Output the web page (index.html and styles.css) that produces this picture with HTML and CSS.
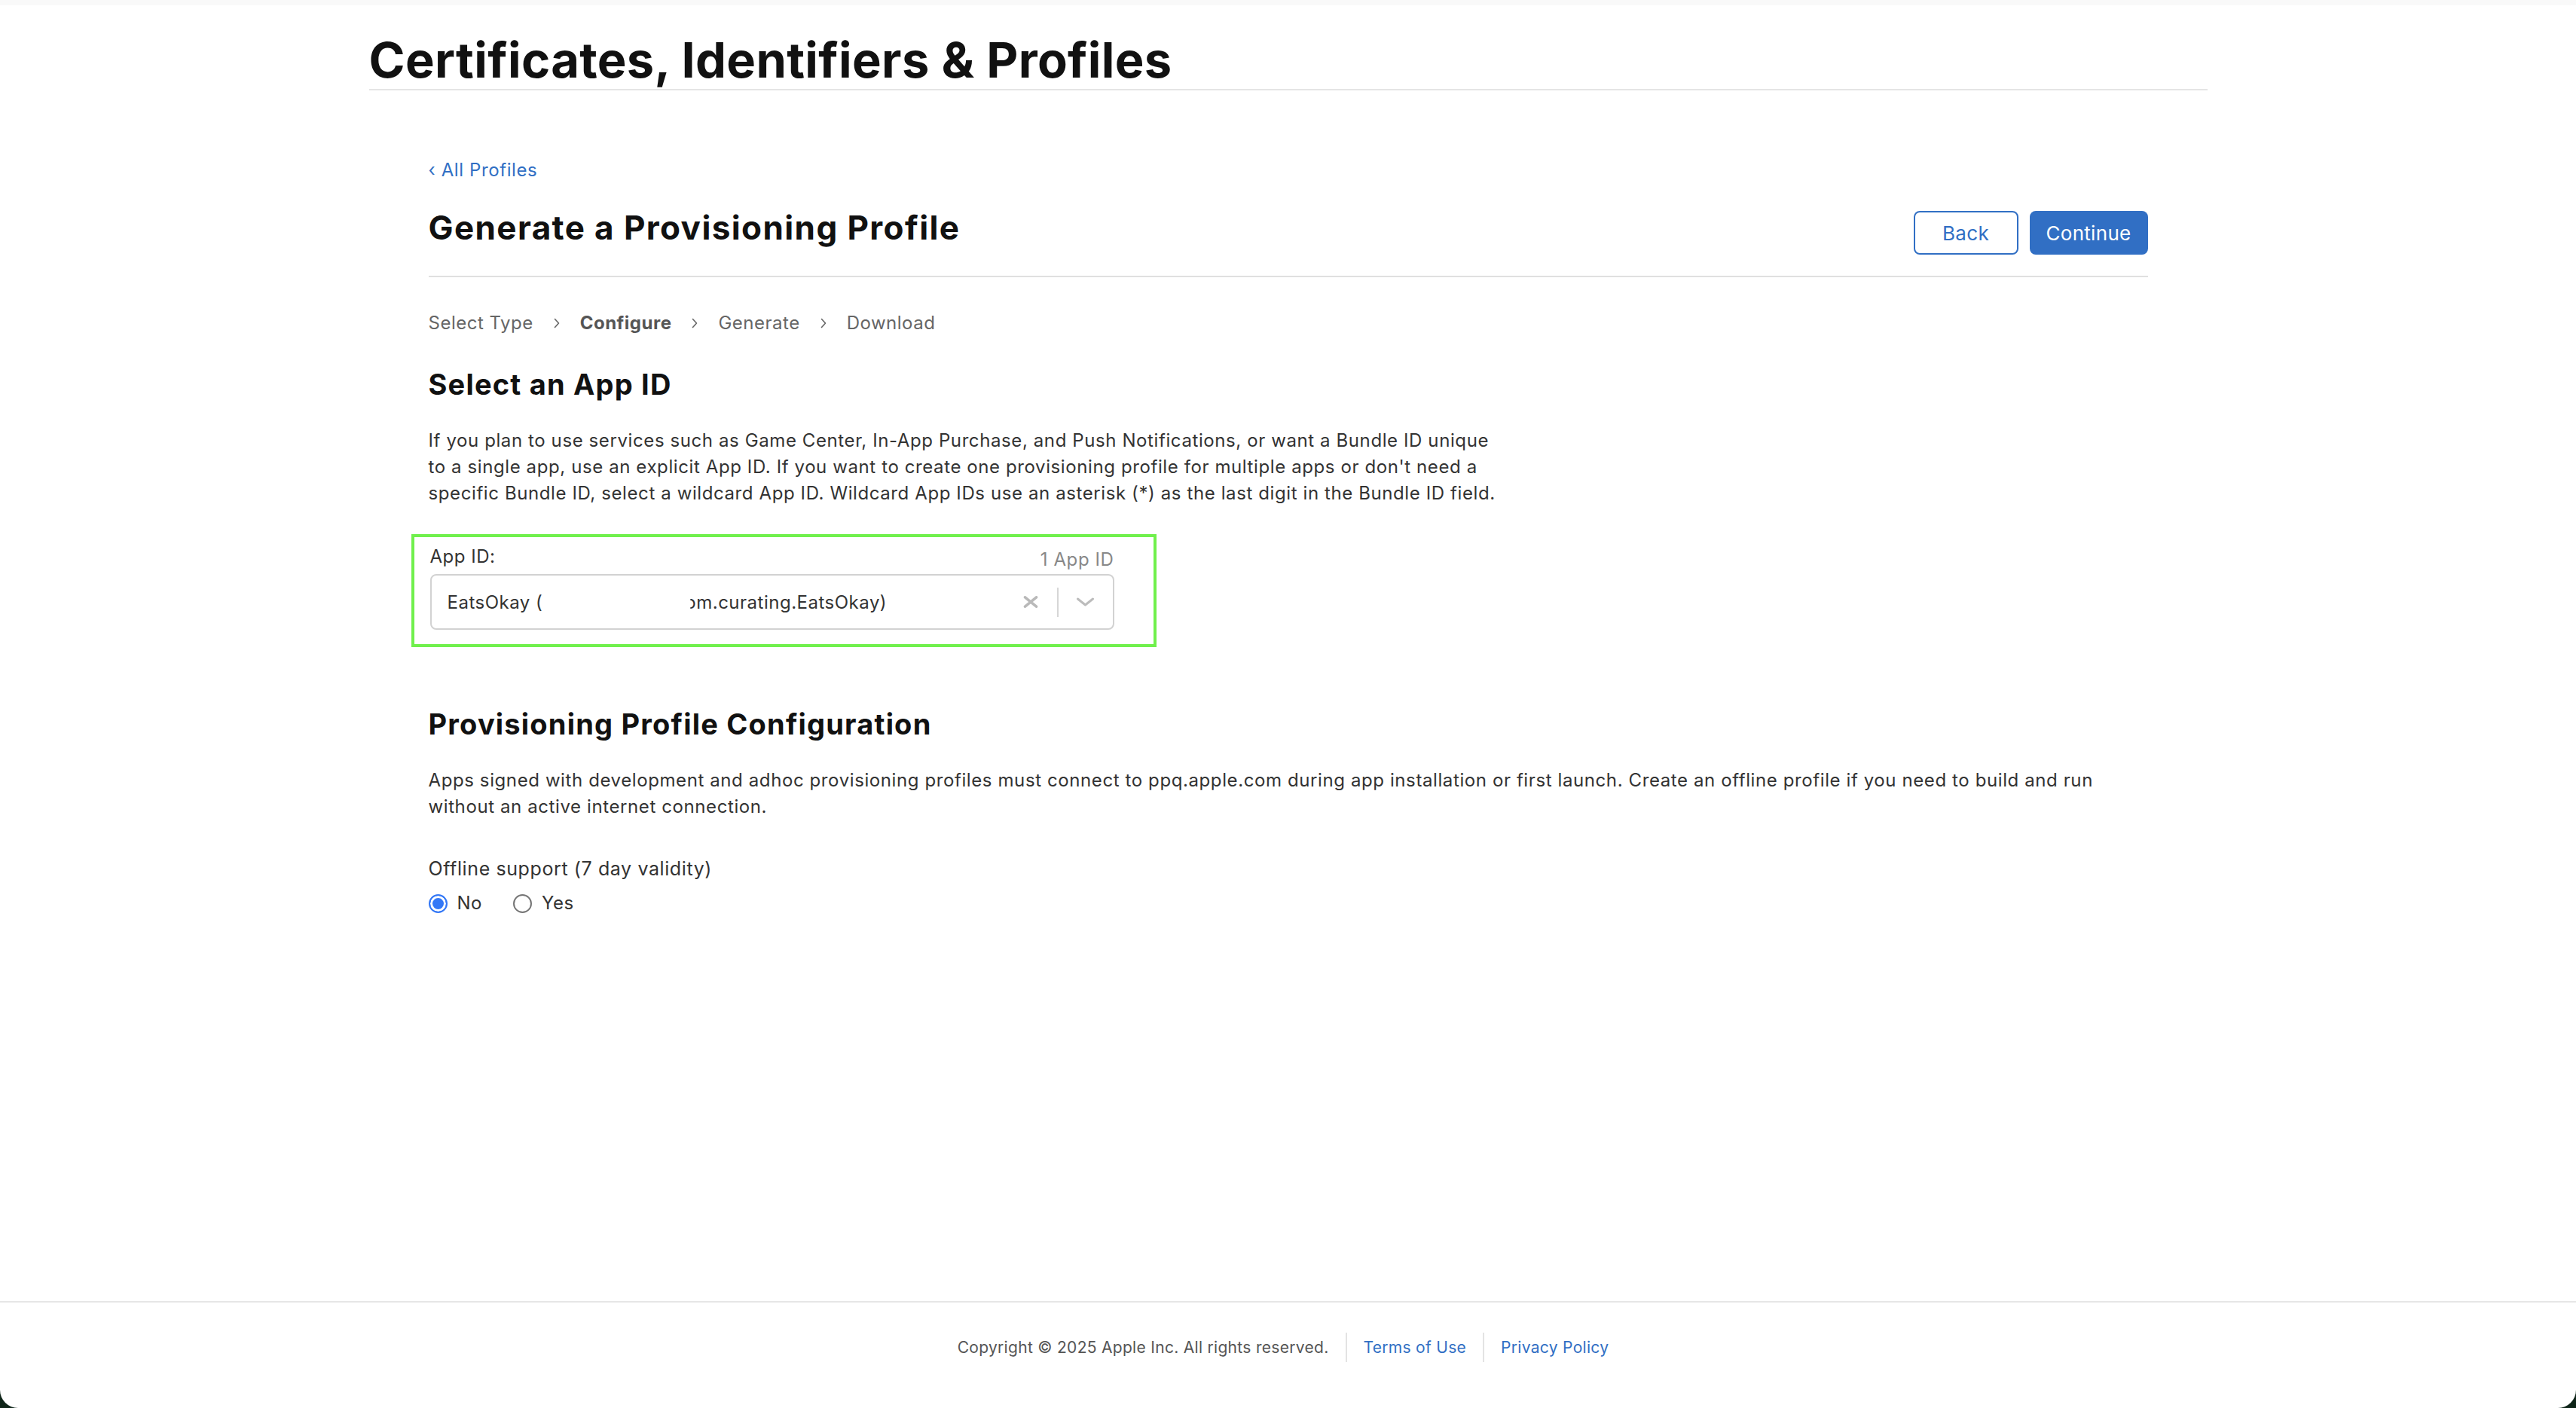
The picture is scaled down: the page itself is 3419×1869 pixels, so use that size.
FILE: index.html
```html
<!DOCTYPE html>
<html lang="en">
<head>
<meta charset="utf-8">
<title>Certificates, Identifiers &amp; Profiles</title>
<link rel="stylesheet" href="styles.css">
</head>
<body>
<div class="page">
  <div class="topstrip"></div>
  <header class="hero">
    <h1 class="hero-title">Certificates, Identifiers &amp; Profiles</h1>
  </header>

  <main class="content">
    <a class="back-link" href="#">&lsaquo; All Profiles</a>

    <div class="title-row">
      <h2 class="page-title">Generate a Provisioning Profile</h2>
      <div class="actions">
        <button class="btn btn-outline" type="button">Back</button>
        <button class="btn btn-primary" type="button">Continue</button>
      </div>
    </div>

    <nav class="steps">
      <span class="step">Select Type</span>
      <svg class="chev" viewBox="0 0 8 14" width="8" height="14"><path d="M1.5 1.5 L6.5 7 L1.5 12.5" fill="none" stroke="#666" stroke-width="1.6" stroke-linecap="round" stroke-linejoin="round"/></svg>
      <span class="step step-current">Configure</span>
      <svg class="chev" viewBox="0 0 8 14" width="8" height="14"><path d="M1.5 1.5 L6.5 7 L1.5 12.5" fill="none" stroke="#666" stroke-width="1.6" stroke-linecap="round" stroke-linejoin="round"/></svg>
      <span class="step">Generate</span>
      <svg class="chev" viewBox="0 0 8 14" width="8" height="14"><path d="M1.5 1.5 L6.5 7 L1.5 12.5" fill="none" stroke="#666" stroke-width="1.6" stroke-linecap="round" stroke-linejoin="round"/></svg>
      <span class="step">Download</span>
    </nav>

    <section class="section">
      <h3 class="section-title">Select an App ID</h3>
      <p class="section-text narrow">If you plan to use services such as Game Center, In-App Purchase, and Push Notifications, or want a Bundle ID unique to a single app, use an explicit App ID. If you want to create one provisioning profile for multiple apps or don't need a specific Bundle ID, select a wildcard App ID. Wildcard App IDs use an asterisk (*) as the last digit in the Bundle ID field.</p>

      <div class="highlight">
        <div class="field">
          <div class="field-head">
            <span class="field-label">App ID:</span>
            <span class="field-count">1 App ID</span>
          </div>
          <div class="select">
            <div class="select-value"><span>EatsOkay (</span><span class="redacted"></span><span class="clipped">om.curating.EatsOkay)</span></div>
            <div class="select-tools">
              <svg class="clear" viewBox="0 0 20 16" width="20" height="16"><path d="M2.5 1.8 L17.5 14.2 M17.5 1.8 L2.5 14.2" stroke="#b9b9b9" stroke-width="3.6" stroke-linecap="round"/></svg>
              <span class="tool-sep"></span>
              <svg class="caret" viewBox="0 0 25 12" width="25" height="12"><path d="M2.5 2 L12.5 10 L22.5 2" fill="none" stroke="#bcbcbc" stroke-width="3" stroke-linecap="round" stroke-linejoin="round"/></svg>
            </div>
          </div>
        </div>
      </div>
    </section>

    <section class="section section-config">
      <h3 class="section-title">Provisioning Profile Configuration</h3>
      <p class="section-text">Apps signed with development and adhoc provisioning profiles must connect to ppq.apple.com during app installation or first launch. Create an offline profile if you need to build and run without an active internet connection.</p>

      <div class="offline">
        <div class="offline-label">Offline support (7 day validity)</div>
        <div class="radios">
          <label class="radio"><span class="radio-dot radio-on"></span>No</label>
          <label class="radio"><span class="radio-dot"></span>Yes</label>
        </div>
      </div>
    </section>
  </main>

  <footer class="footer">
    <span class="footer-item footer-copy">Copyright &copy; 2025 Apple Inc. All rights reserved.</span>
    <a class="footer-item footer-link" href="#">Terms of Use</a>
    <a class="footer-item footer-link" href="#">Privacy Policy</a>
  </footer>
</div>
</body>
</html>
```

FILE: styles.css
```css
html {
  background: #0f2519;
}
body {
  margin: 0;
  font-family: "Inter", "Liberation Sans", sans-serif;
  color: #333;
}
.page {
  background: #fff;
  min-height: 1869px;
  display: flex;
  flex-direction: column;
  border-radius: 0 0 24px 24px;
  overflow: hidden;
}
.topstrip {
  height: 7px;
  background: #f9f9f9;
}
.hero {
  width: 2440px;
  margin: 0 auto;
  padding-top: 37px;
  padding-bottom: 2px;
  border-bottom: 2px solid #e5e5e5;
}
.hero-title {
  margin: 0;
  font-size: 65px;
  line-height: 72px;
  font-weight: 700;
  letter-spacing: 0.35px;
  color: #111;
}
.content {
  width: 2282px;
  margin: 0 auto;
  flex: 1;
}
.back-link {
  display: inline-block;
  margin-top: 90px;
  font-size: 24px;
  line-height: 32px;
  letter-spacing: 0.6px;
  color: #316fc4;
  text-decoration: none;
}
.title-row {
  display: flex;
  justify-content: space-between;
  align-items: flex-start;
  margin-top: 34px;
  padding-bottom: 28px;
  border-bottom: 2px solid #e0e0e0;
}
.page-title {
  margin: 0;
  font-size: 44px;
  line-height: 52px;
  font-weight: 700;
  color: #111;
  letter-spacing: 1.4px;
}
.actions {
  display: flex;
  gap: 15px;
  margin-top: 4px;
}
.btn {
  height: 58px;
  border-radius: 8px;
  font-family: inherit;
  font-size: 26px;
  letter-spacing: 0.3px;
  padding: 0;
  cursor: pointer;
}
.btn-outline {
  width: 139px;
  background: #fff;
  border: 2px solid #316fc4;
  color: #316fc4;
}
.btn-primary {
  width: 157px;
  background: #316fc4;
  border: 2px solid #316fc4;
  color: #fff;
}
.steps {
  display: flex;
  align-items: center;
  gap: 27px;
  margin-top: 45px;
  font-size: 24px;
  line-height: 32px;
  letter-spacing: 0.5px;
  color: #666;
}
.step-current {
  font-weight: 700;
  color: #555;
}
.chev {
  display: block;
}
.section-title {
  margin: 43px 0 0;
  font-size: 38px;
  line-height: 44px;
  font-weight: 700;
  color: #111;
  letter-spacing: 1.2px;
}
.section-text {
  margin: 35px 0 0;
  font-size: 24px;
  line-height: 35px;
  letter-spacing: 0.6px;
  color: #333;
}
.narrow {
  max-width: 1425px;
}
.highlight {
  display: inline-block;
  margin-top: 37px;
  margin-left: -23px;
  border: 4px solid #70f04c;
  padding: 12px 52px 19px 21px;
}
.field {
  width: 908px;
}
.field-head {
  display: flex;
  justify-content: space-between;
  align-items: baseline;
  line-height: 28px;
}
.field-label {
  font-size: 24px;
  letter-spacing: 0.5px;
  color: #333;
}
.field-count {
  font-size: 24px;
  letter-spacing: 0.6px;
  color: #888;
  position: relative;
  top: 4px;
}
.select {
  margin-top: 9px;
  height: 74px;
  box-sizing: border-box;
  border: 2px solid #d2d2d2;
  border-radius: 8px;
  display: flex;
  align-items: center;
  justify-content: space-between;
  padding: 0 24px 0 21px;
}
.select-value {
  display: flex;
  align-items: center;
  font-size: 24px;
  letter-spacing: 0.5px;
  color: #333;
  white-space: nowrap;
}
.redacted {
  display: inline-block;
  width: 196px;
}
.clipped {
  display: inline-block;
  clip-path: inset(0 0 0 7px);
  margin-left: -7px;
}
.select-tools {
  display: flex;
  align-items: center;
}
.clear {
  display: block;
  margin-right: 25px;
}
.tool-sep {
  width: 2px;
  height: 39px;
  background: #d6d6d6;
  margin-right: 23px;
}
.caret {
  display: block;
}
.section-config .section-title {
  margin-top: 80px;
}
.offline {
  margin-top: 49px;
}
.offline-label {
  font-size: 25px;
  line-height: 32px;
  letter-spacing: 0.6px;
  color: #333;
}
.radios {
  display: flex;
  gap: 41px;
  margin-top: 14px;
  font-size: 24px;
  line-height: 32px;
  letter-spacing: 0.5px;
  color: #333;
}
.radio {
  display: flex;
  align-items: center;
  gap: 13px;
}
.radio-dot {
  width: 25px;
  height: 25px;
  box-sizing: border-box;
  border-radius: 50%;
  border: 2px solid #767676;
  background: #fff;
}
.radio-on {
  border-color: #3478f6;
  background: #3478f6;
  box-shadow: inset 0 0 0 3px #fff;
}
.footer {
  border-top: 2px solid #e6e6e6;
  display: flex;
  justify-content: center;
  align-items: center;
  padding: 40px 0 61px;
  margin-left: -13px;
}
.footer-item {
  font-size: 21px;
  line-height: 39px;
  letter-spacing: 0.3px;
  padding: 0 22px;
}
.footer-copy {
  color: #555;
}
.footer-link {
  color: #316fc4;
  text-decoration: none;
  border-left: 2px solid #e3e3e3;
}
```
